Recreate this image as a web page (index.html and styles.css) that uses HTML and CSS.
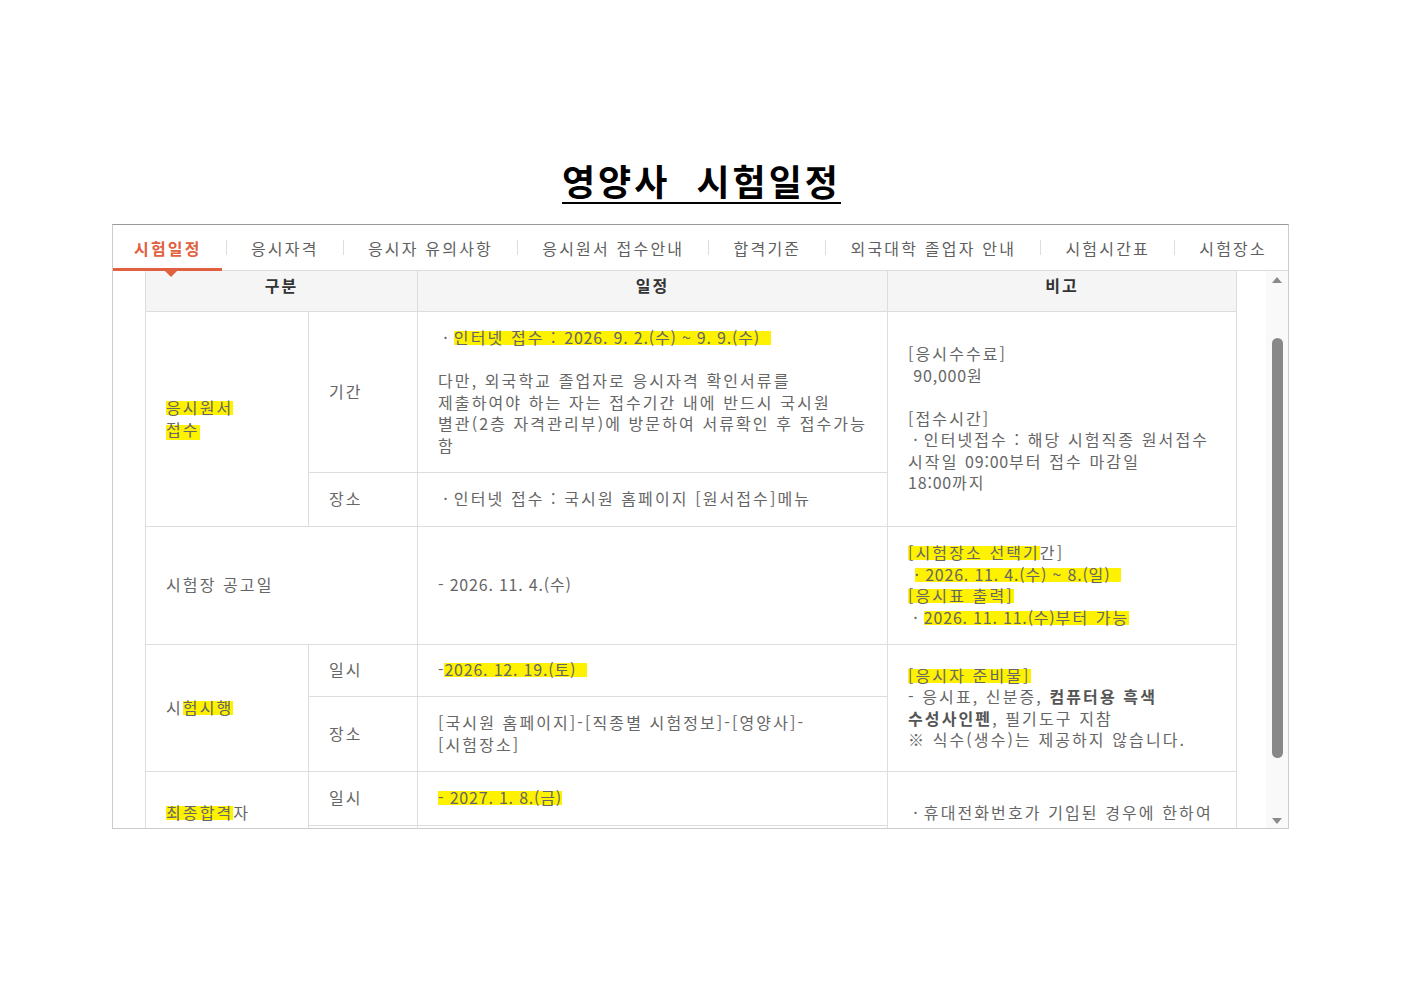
FILE: index.html
```html
<!DOCTYPE html>
<html lang="ko">
<head>
<meta charset="utf-8">
<title>영양사 시험일정</title>
<link rel="stylesheet" href="styles.css">
</head>
<body>
<h1 class="title"><span>영양사&nbsp; 시험일정</span></h1>
<div class="frame">
  <ul class="tabs">
    <li class="tab active">시험일정</li><li class="sep"></li>
    <li class="tab">응시자격</li><li class="sep"></li>
    <li class="tab">응시자 유의사항</li><li class="sep"></li>
    <li class="tab">응시원서 접수안내</li><li class="sep"></li>
    <li class="tab">합격기준</li><li class="sep"></li>
    <li class="tab">외국대학 졸업자 안내</li><li class="sep"></li>
    <li class="tab">시험시간표</li><li class="sep"></li>
    <li class="tab">시험장소</li>
  </ul>
  <div class="body">
    <div class="viewport">
      <table class="sched">
        <colgroup><col class="c1"><col class="c2"><col class="c3"><col class="c4"></colgroup>
        <thead>
          <tr class="rh"><th colspan="2">구분</th><th>일정</th><th>비고</th></tr>
        </thead>
        <tbody>
          <tr class="r1a">
            <td rowspan="2" class="cat"><span class="hl">응시원서</span><br><span class="hl hl-low">접수</span></td>
            <td class="sub">기간</td>
            <td><span class="d">&nbsp;· </span><span class="hl">인터넷 접수 : <span class="d">2026. 9. 2.(수) ~ 9. 9.(수)&nbsp;&nbsp;</span></span><br><br>다만, 외국학교 졸업자로 응시자격 확인서류를<br>제출하여야 하는 자는 접수기간 내에 반드시 국시원<br>별관(2층 자격관리부)에 방문하여 서류확인 후 접수가능<br>함</td>
            <td rowspan="2">[응시수수료]<br><span class="d">&nbsp;90,000</span>원<br><br>[접수시간]<br><span class="d">&nbsp;· </span>인터넷접수 : 해당 시험직종 원서접수<br>시작일 <span class="d">09:00</span>부터 접수 마감일<br><span class="d">18:00</span>까지</td>
          </tr>
          <tr class="r1b">
            <td class="sub">장소</td>
            <td><span class="d">&nbsp;· </span>인터넷 접수 : 국시원 홈페이지 [원서접수]메뉴</td>
          </tr>
          <tr class="r2">
            <td colspan="2" class="cat">시험장 공고일</td>
            <td><span class="d">- 2026. 11. 4.(수)</span></td>
            <td><span class="hl">[시험장소 선택기</span>간]<br>&nbsp;<span class="hl d">· 2026. 11. 4.(수) ~ 8.(일)&nbsp;&nbsp;</span><br><span class="hl">[응시표 출력]</span><br><span class="d">&nbsp;· </span><span class="hl"><span class="d">2026. 11. 11.(수)</span>부터 가능</span></td>
          </tr>
          <tr class="r3a">
            <td rowspan="2" class="cat">시<span class="hl">험시행</span></td>
            <td class="sub">일시</td>
            <td><span class="d">-<span class="hl">2026. 12. 19.(토)&nbsp;&nbsp;</span></span></td>
            <td rowspan="2"><span class="hl">[응시자 준비물]</span><br>- 응시표, 신분증, <b>컴퓨터용 흑색<br>수성사인펜</b>, 필기도구 지참<br>※ 식수(생수)는 제공하지 않습니다.</td>
          </tr>
          <tr class="r3b">
            <td class="sub">장소</td>
            <td>[국시원 홈페이지]-[직종별 시험정보]-[영양사]-<br>[시험장소]</td>
          </tr>
          <tr class="r4a">
            <td rowspan="2" class="cat"><span class="hl">최종합격</span>자</td>
            <td class="sub">일시</td>
            <td><span class="hl d">- 2027. 1. 8.(금)</span></td>
            <td rowspan="2"><span class="d">&nbsp;· </span>휴대전화번호가 기입된 경우에 한하여</td>
          </tr>
          <tr class="r4b">
            <td class="sub"></td>
            <td></td>
          </tr>
        </tbody>
      </table>
    </div>
    <div class="scrollbar">
      <span class="arrow up"></span>
      <span class="thumb"></span>
      <span class="arrow down"></span>
    </div>
  </div>
</div>
</body>
</html>
```

FILE: styles.css
```css
* { box-sizing: border-box; }

body {
  margin: 0;
  background: #fff;
  font-family: "Noto Sans CJK KR", "Noto Sans", sans-serif;
  color: #666;
}

.title {
  margin: 0;
  padding-top: 158px;
  text-align: center;
  font-size: 36px;
  line-height: 44px;
  font-weight: 700;
  letter-spacing: 3px;
  color: #000;
}

.title span {
  display: inline-block;
  border-bottom: 2px solid #000;
}

.frame {
  width: 1177px;
  margin: 20px 0 0 112px;
  border: 1px solid #ccc;
  border-top-color: #999;
}

.tabs {
  display: flex;
  justify-content: space-between;
  align-items: center;
  height: 46px;
  margin: 0;
  padding: 0 21px;
  list-style: none;
  border-bottom: 1px solid #ddd;
}

.tab {
  position: relative;
  height: 100%;
  display: flex;
  align-items: center;
  font-size: 16px;
  letter-spacing: 2.2px;
  color: #5f5f5f;
}

.tab.active {
  color: #e0603f;
  font-weight: 700;
}

.tab.active::after {
  content: "";
  position: absolute;
  left: -21px;
  right: -20px;
  bottom: -1px;
  height: 3px;
  background: #e0603f;
}

.tab.active::before {
  content: "";
  position: absolute;
  top: calc(100% + 1px);
  left: 50%;
  margin-left: -3px;
  border-left: 6px solid transparent;
  border-right: 6px solid transparent;
  border-top: 6px solid #e0603f;
  z-index: 2;
}

.sep {
  width: 1px;
  height: 15px;
  background: #ddd;
}

.body {
  display: flex;
  height: 557px;
}

.viewport {
  flex: 1;
  overflow: hidden;
  padding-left: 32px;
}

.scrollbar {
  width: 22px;
  background: #f9f9f9;
  display: flex;
  flex-direction: column;
  align-items: center;
}

.arrow {
  width: 0;
  height: 0;
  border-left: 5px solid transparent;
  border-right: 5px solid transparent;
}

.arrow.up {
  margin-top: 6px;
  border-bottom: 6px solid #8a8a8a;
}

.arrow.down {
  margin-top: auto;
  margin-bottom: 4px;
  border-top: 6px solid #8a8a8a;
}

.thumb {
  margin-top: 55px;
  width: 11px;
  height: 420px;
  border-radius: 6px;
  background: #888;
}

.sched {
  border-collapse: collapse;
  table-layout: fixed;
  width: 1091px;
  font-size: 16px;
  line-height: 21.5px;
  letter-spacing: 2.1px;
}

.sched col.c1 { width: 163px; }
.sched col.c2 { width: 109px; }
.sched col.c3 { width: 470px; }
.sched col.c4 { width: 349px; }

.sched th,
.sched td {
  border: 1px solid #ddd;
  padding: 0 20px;
  vertical-align: middle;
  text-align: left;
  font-weight: 400;
  white-space: nowrap;
}

.sched th {
  border-top: 0;
  padding-bottom: 10px;
  background: #f5f5f5;
  text-align: center;
  font-weight: 700;
  color: #333;
}

.sched b {
  font-weight: 700;
  color: #555;
}

.d { letter-spacing: 0.8px; }

.rh { height: 40px; }
.r1a { height: 161px; }
.r1b { height: 54px; }
.r2 { height: 118px; }
.r3a { height: 52px; }
.r3b { height: 75px; }
.r4a { height: 54px; }
.r4b { height: 30px; }

.hl {
  background: linear-gradient(transparent 24%, #fff200 24%, #fff200 84%, transparent 84%);
}

.hl-low {
  background: linear-gradient(transparent 34%, #fff200 34%, #fff200 96%, transparent 96%);
}
```
